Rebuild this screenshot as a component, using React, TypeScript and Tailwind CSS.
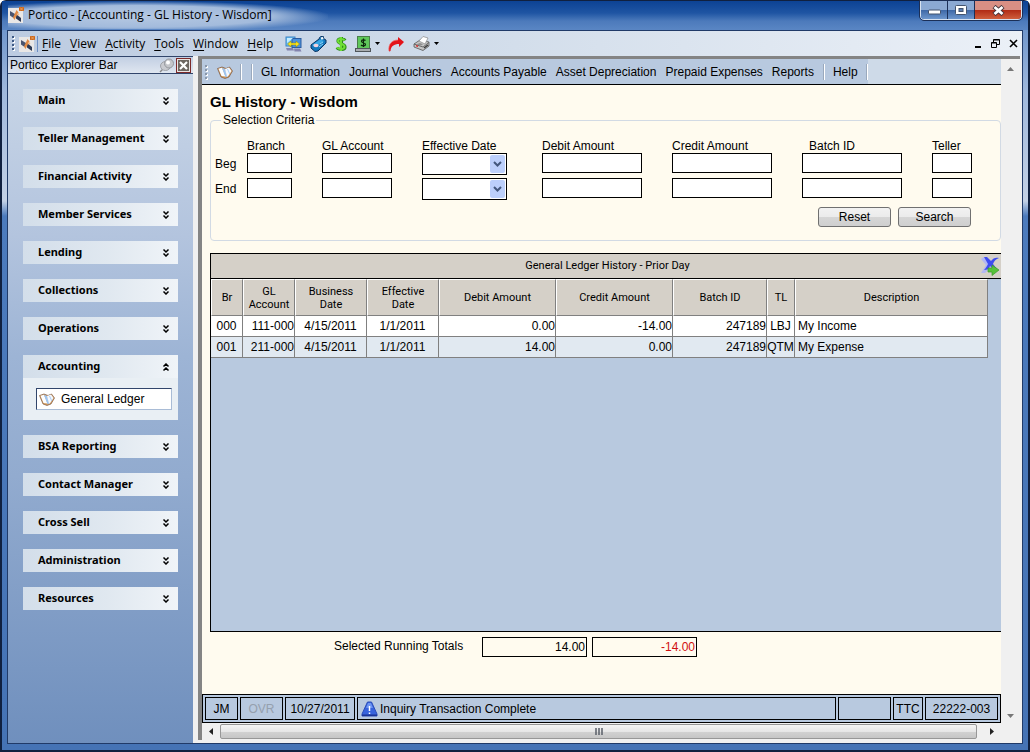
import type { ReactNode } from "react";

const sections = [
  "Main",
  "Teller Management",
  "Financial Activity",
  "Member Services",
  "Lending",
  "Collections",
  "Operations",
  "Accounting",
  "BSA Reporting",
  "Contact Manager",
  "Cross Sell",
  "Administration",
  "Resources",
];

const menus = ["File", "View", "Activity", "Tools", "Window", "Help"];

const modules = [
  "GL Information",
  "Journal Vouchers",
  "Accounts Payable",
  "Asset Depreciation",
  "Prepaid Expenses",
  "Reports",
];

const fields = [
  { label: "Branch", width: "w-[45px]" },
  { label: "GL Account", width: "w-[70px]" },
  { label: "Effective Date", width: "w-[85px]", date: true },
  { label: "Debit Amount", width: "w-[100px]" },
  { label: "Credit Amount", width: "w-[100px]" },
  { label: "Batch ID", width: "w-[100px]", indent: true },
  { label: "Teller", width: "w-[40px]" },
];

const columns = [
  { title: "Br", width: "w-[32px]", align: "text-center" },
  { title: "GL\nAccount", width: "w-[52px]", align: "text-right" },
  { title: "Business\nDate", width: "w-[72px]", align: "text-center" },
  { title: "Effective\nDate", width: "w-[72px]", align: "text-center" },
  { title: "Debit Amount", width: "w-[117px]", align: "text-right" },
  { title: "Credit Amount", width: "w-[117px]", align: "text-right" },
  { title: "Batch ID", width: "w-[94px]", align: "text-right" },
  { title: "TL", width: "w-[28px]", align: "text-center" },
  { title: "Description", width: "w-[193px]", align: "pl-[3px] text-left" },
];

const rows = [
  ["000", "111-000", "4/15/2011", "1/1/2011", "0.00", "-14.00", "247189", "LBJ", "My Income"],
  ["001", "211-000", "4/15/2011", "1/1/2011", "14.00", "0.00", "247189", "QTM", "My Expense"],
];

function AppIcon() {
  return (
    <svg width="16" height="16" viewBox="0 0 16 16" className="shrink-0">
      <rect y="1" width="15" height="15" fill="#e9e7e6" />
      <path d="M2 4l5 3v5L2 8.500z" fill="#4a5570" />
      <path d="M8 7l5 4v4l-5-3.500z" fill="#2d3a55" />
      <path d="M8.500 3 10.500 5.500 8 10 6.500 13 5 10.500z" fill="#e08a45" />
      <path d="M9 6l2.500 1L10 9z" fill="#f3b57e" />
      <rect x="11" width="5" height="4" fill="#c9661c" />
      <path d="M12 .5l3 3M15 .5l-3 3" stroke="#f2a765" strokeWidth=".9" />
    </svg>
  );
}

function BookIcon() {
  return (
    <svg width="16" height="13" viewBox="0 0 16 13" className="shrink-0">
      <path d="M.5 2.500 5 1l4 1.500L12.500 1l3 4-3.500 6-4 1.500L4 11z" fill="#d39a5b" stroke="#6b4a35" strokeWidth=".6" />
      <path d="M1.500 2.800 5 1.700 8.500 10.500 4.500 10z" fill="#fbfdff" />
      <path d="M5 1.700 8 3l2.500 7.500-2 .8z" fill="#9cc4f2" />
      <path d="M8 3l4-1.500L14.500 5l-3.300 5-1.200.7z" fill="#f3f8ff" />
      <path d="M10.500 3l2.300 5" stroke="#a9cdf5" />
    </svg>
  );
}

function Chevrons({ up }: { up?: boolean }) {
  return (
    <svg width="8" height="8" viewBox="0 0 8 8" className="shrink-0">
      <path
        d={up ? "M1.500 3.500 4 1l2.500 2.500M1.500 7.500 4 5l2.500 2.500" : "M1.500.5 4 3 6.500.5M1.500 4.500 4 7l2.500-2.500"}
        fill="none"
        stroke="#000"
        strokeWidth="1.500"
      />
    </svg>
  );
}

function Caret() {
  return (
    <svg width="5" height="3" viewBox="0 0 5 3" className="shrink-0">
      <path d="M0 0h5L2.500 3z" fill="#000" />
    </svg>
  );
}

function NetworkIcon() {
  return (
    <svg width="17" height="16" viewBox="0 0 17 16">
      <rect x="1" y="1" width="9" height="9" fill="#6cc6f8" stroke="#3c82c4" />
      <rect x="7" y="2.500" width="9" height="9" fill="#4b92dc" stroke="#2c5c9f" />
      <path d="M2 2h6L2 7z" fill="#c5ecff" />
      <path d="M2.500 8 6 5v2h5V5l3.500 3L11 11V9H6v2z" fill="#f6e21c" stroke="#8c7c10" strokeWidth=".5" />
      <path d="M1 12h7l1 2.500H2zM9 12.500h6l1.500 3h-7z" fill="#8384ae" />
    </svg>
  );
}

function CardIcon() {
  return (
    <svg width="17" height="16" viewBox="0 0 17 16">
      <path d="M1 9 9 3l1-2 3-1 1 3 2 1v3L8 15l-3 .5L1 12z" fill="#1478bd" stroke="#0b3564" />
      <path d="M2 9l8-5.500L14 5 6 11z" fill="#37a6e4" />
      <path d="M10.500 1.500 13 1l.5 2-2 .8z" fill="#f4f8fb" />
      <ellipse cx="6" cy="9.500" rx="2.600" ry="1.800" fill="#f4d3de" />
      <path d="M10 8l3-2M9 11l4-3" stroke="#8fd4f7" />
    </svg>
  );
}

function DollarIcon() {
  return (
    <svg width="12" height="16" viewBox="0 0 12 16">
      <path d="M10 4.500C9 2.500 3 2 3 5c0 3 7 2.500 7 6 0 3.500-6.500 3-8 .5M6.500 1v14" fill="none" stroke="#2f8a1c" strokeWidth="3.200" />
      <path d="M9.500 4.500C8.500 2.500 3 2.500 3 5c0 3 6.500 2.500 6.500 5.800 0 3-5.800 2.700-7.500.5M6 1v14" fill="none" stroke="#6fdf35" strokeWidth="2" />
    </svg>
  );
}

function CashIcon() {
  return (
    <svg width="16" height="16" viewBox="0 0 16 16">
      <rect x="2.500" y=".5" width="12" height="12" fill="#5fc75a" stroke="#4a7d49" />
      <path d="M10.500 4.500C9.500 3.500 6.500 3.500 6.500 5.200c0 1.800 4 1.300 4 3.300 0 1.800-3.500 1.700-4.500.5M8.500 2.500v8.500" fill="none" stroke="#0b260b" strokeWidth="1.200" />
      <rect x=".5" y="12.500" width="15" height="3" fill="#a9adb0" stroke="#50565a" />
    </svg>
  );
}

function RedArrowIcon() {
  return (
    <svg width="17" height="16" viewBox="0 0 17 16">
      <path d="M1 15.500C0 8 4 4 10 4V1l6 5-5 5V8C6 8 3 10 2.500 15z" fill="#e3131a" />
      <path d="M1 15C0 8 4 4 10 4" fill="none" stroke="#f26b68" strokeWidth=".7" />
    </svg>
  );
}

function PrinterIcon() {
  return (
    <svg width="17" height="15" viewBox="0 0 17 15">
      <path d="M1 8 7 4l9 2v4l-6 4.500L1 11z" fill="#c4c4c4" stroke="#555" strokeWidth=".8" />
      <path d="M6 5l4-4.500 5 1.500-3 6z" fill="#fff" stroke="#888" strokeWidth=".7" />
      <path d="M1 8l9 3 6-4.500" fill="none" stroke="#555" strokeWidth=".8" />
      <path d="M3 8.500 7 7l3 1.200-2 1.300z" fill="#8f8f8f" />
      <path d="M3 9.700l2 .6" stroke="#e02020" strokeWidth="1.400" />
      <path d="M11 12l4-3" stroke="#3c3c3c" strokeWidth="1.500" />
    </svg>
  );
}

function ExportIcon() {
  return (
    <svg width="20" height="20" viewBox="0 0 20 20">
      <path d="M1 3l3-2 5 5-1 3 2 3-5 5H1l5-8z" fill="#b3b7f3" />
      <path d="M4 1h3l4 4c2-3 5-4 8-3-3 1-5 3-6 6l4 5-3 1-4-4c-1 3-3 4-6 4 2-2 3-4 4-6z" fill="#3f4cf0" />
      <path d="M8 12h4V9l7 5-7 5.500V16H8z" fill="#56c239" stroke="#3a9a2a" strokeWidth=".7" />
    </svg>
  );
}

function Grip({ tone }: { tone: string }) {
  return (
    <svg width="3" height="15" viewBox="0 0 3 15" className="shrink-0">
      {[0, 4, 8, 12].map((y) => (
        <g key={y}>
          <rect x="1" y={y + 1} width="2" height="2" fill="#fff" />
          <rect x="0" y={y} width="2" height="2" fill={tone} />
        </g>
      ))}
    </svg>
  );
}

function Separator() {
  return <div className="h-4 w-[2px] shrink-0 border-r border-white bg-[#9aa9bd]" />;
}

function TitleBar() {
  return (
    <header className="flex h-[29px] items-start justify-between bg-[linear-gradient(to_bottom,#0c4294_0px,#1f55a3_12px,#4c7abb_20px,#5a86c4_29px)] pl-[6px] pr-[6px]">
      <div className="flex h-[28px] w-[320px] items-center gap-1 bg-[radial-gradient(ellipse_at_40%_55%,#b5c8e2_0%,#a3bbdc_50%,transparent_72%)] font-['Open_Sans',sans-serif] text-[12px] text-black">
        <AppIcon />
        <h1 className="whitespace-nowrap">Portico - [Accounting - GL History - Wisdom]</h1>
      </div>
      <div className="flex h-[19px] overflow-hidden rounded-b-[4px] border border-t-0 border-[#d6e1f0] outline outline-[#1b2f57]">
        <button aria-label="Minimize" className="flex w-[27px] items-center justify-center border-r border-[#1b2f57] bg-[linear-gradient(to_bottom,#8ba9d3_50%,#3d67a6_50%,#6d96cc)]">
          <svg width="13" height="6" viewBox="0 0 13 6" className="mt-1">
            <rect x=".5" y="1" width="12" height="4" rx="1" fill="#fff" stroke="#44546e" />
          </svg>
        </button>
        <button aria-label="Maximize" className="flex w-[27px] items-center justify-center border-r border-[#1b2f57] bg-[linear-gradient(to_bottom,#8ba9d3_50%,#3d67a6_50%,#6d96cc)]">
          <svg width="12" height="10" viewBox="0 0 12 10">
            <rect x=".5" y=".5" width="11" height="9" rx="1" fill="#fff" stroke="#44546e" />
            <rect x="4" y="3.500" width="4" height="3" fill="#5c7fb2" stroke="#44546e" />
          </svg>
        </button>
        <button aria-label="Close" className="flex w-[46px] items-center justify-center bg-[linear-gradient(to_bottom,#d98f84_50%,#b02a14_50%,#cf5f3d)]">
          <svg width="13" height="11" viewBox="0 0 13 11">
            <path d="M2 1.500 11 9.500M11 1.500 2 9.500" stroke="#44343a" strokeWidth="4.500" />
            <path d="M2.500 2l8 7M10.500 2l-8 7" stroke="#fff" strokeWidth="2.800" />
          </svg>
        </button>
      </div>
    </header>
  );
}

function ToolButton({ label, children }: { label: string; children: ReactNode }) {
  return (
    <button aria-label={label} className="flex items-center gap-1">
      {children}
    </button>
  );
}

function MenuBar() {
  return (
    <div className="flex h-[25px] items-center bg-[linear-gradient(to_right,#bccbe1,#d3deeb_50%,#ebf0f7)] pl-1 pr-1">
      <Grip tone="#3f5a85" />
      <div className="ml-1 flex items-center gap-[2px]">
        <AppIcon />
        <div className="h-4 w-px bg-[#6d8fc4]" />
      </div>
      <nav className="ml-1 flex gap-[9px] font-['Open_Sans',sans-serif] text-[12px]">
        {menus.map((menu) => (
          <button key={menu}>
            <span className="underline underline-offset-2">{menu[0]}</span>
            {menu.slice(1)}
          </button>
        ))}
      </nav>
      <div className="ml-3 flex items-center gap-2">
        <ToolButton label="Network"><NetworkIcon /></ToolButton>
        <ToolButton label="Member card"><CardIcon /></ToolButton>
        <ToolButton label="Currency"><DollarIcon /></ToolButton>
        <ToolButton label="Cash"><CashIcon /><Caret /></ToolButton>
        <ToolButton label="Forward"><RedArrowIcon /></ToolButton>
        <ToolButton label="Print"><PrinterIcon /><Caret /></ToolButton>
      </div>
      <div className="ml-auto flex items-center gap-[9px]">
        <button aria-label="Minimize window">
          <svg width="7" height="9" viewBox="0 0 7 9"><rect y="7" width="6" height="2" /></svg>
        </button>
        <button aria-label="Restore window">
          <svg width="9" height="9" viewBox="0 0 9 9" fill="none" stroke="#000">
            <path d="M2.500 3V.5h6v5H6M2.500 1h6" />
            <path d="M.5 3.500h5v5h-5zM.5 4h5" />
          </svg>
        </button>
        <button aria-label="Close window">
          <svg width="9" height="9" viewBox="0 0 9 9"><path d="M1 1l7 7M8 1 1 8" stroke="#000" strokeWidth="1.600" /></svg>
        </button>
      </div>
    </div>
  );
}

function ExplorerBar() {
  return (
    <aside className="flex w-[185px] shrink-0 flex-col bg-[linear-gradient(to_bottom,#cbd8e8_0px,#b3c4de_180px,#9db4d5_300px,#92abcf_420px,#6f8fbd_690px)]">
      <div className="flex h-[18px] items-center border-y border-[#31456b] bg-[linear-gradient(to_bottom,#c2cfe3,#dfe6f0)] pl-[2px]">
        <h2 className="text-[12px]">Portico Explorer Bar</h2>
        <button aria-label="Pin" className="ml-auto">
          <svg width="16" height="15" viewBox="0 0 16 15">
            <path d="M1 14l5-5" stroke="#888" strokeWidth="1.500" />
            <ellipse cx="6.500" cy="8" rx="5" ry="4.500" fill="#c9cbd0" stroke="#a0a3a9" />
            <circle cx="10" cy="5.500" r="4.500" fill="#c4c6ca" stroke="#94979d" />
            <circle cx="9" cy="4.500" r="2" fill="#fff" />
          </svg>
        </button>
        <button aria-label="Close explorer bar" className="ml-px mr-[2px] flex size-[15px] items-center justify-center border border-[#7c2a2a] bg-[#e9e4e2]">
          <svg width="11" height="11" viewBox="0 0 11 11">
            <rect width="11" height="11" fill="#6c6660" />
            <path d="M2 2l7 7M9 2 2 9" stroke="#fff" strokeWidth="2.200" />
          </svg>
        </button>
      </div>
      <div className="flex flex-col gap-[15px] p-[15px]">
        {sections.map((name) => (
          <section key={name} className="bg-[#e9eff4]">
            <button className="flex h-[23px] w-full items-center justify-between bg-[linear-gradient(to_right,#d3deea,#e0e8f0_55%,#f0f4f8)] pl-[15px] pr-2 font-['Noto_Sans',sans-serif] text-[11px] font-bold">
              {name}
              <Chevrons up={name === "Accounting"} />
            </button>
            {name === "Accounting" && (
              <div className="py-[10px] pl-[13px] pr-[6px]">
                <a href="#general-ledger" className="flex h-[22px] items-center gap-[6px] border border-[#a9bcd6] border-l-[#31456b] border-t-[#31456b] bg-white pl-[2px] text-[12px]">
                  <BookIcon />
                  General Ledger
                </a>
              </div>
            )}
          </section>
        ))}
      </div>
    </aside>
  );
}

function ModuleBar() {
  return (
    <div className="flex h-[26px] items-center border-b border-black bg-[linear-gradient(to_right,#b8c9df_666px,#cedae8_666px)] pl-[3px] pt-px text-[12px]">
      <Grip tone="#8996a8" />
      <button aria-label="Ledger" className="ml-[9px] mr-[7px]"><BookIcon /></button>
      <Separator />
      <div className="w-[9px]" />
      <Separator />
      <nav className="ml-2 mr-[9px] flex gap-[9px] whitespace-nowrap">
        {modules.map((name) => (
          <button key={name}>{name}</button>
        ))}
      </nav>
      <Separator />
      <button className="mx-2">Help</button>
      <Separator />
    </div>
  );
}

function Criteria() {
  return (
    <fieldset className="min-w-0 rounded-[4px] border border-[#d2dae4] pb-[13px] pl-1 text-[12px]">
      <legend className="ml-[6px] px-[2px] leading-4">Selection Criteria</legend>
      <div className="grid grid-cols-[32px_75px_100px_120px_130px_130px_130px_40px] gap-y-[3px] pt-[11px]">
        <span />
        {fields.map((f) => (
          <span key={f.label} className={`-mb-1 whitespace-nowrap leading-[15px] ${f.indent ? "pl-[7px]" : ""}`}>
            {f.label}
          </span>
        ))}
        {["Beg", "End"].map((edge) => (
          <div key={edge} className="contents">
            <span className="leading-[22px]">{edge}</span>
            {fields.map((f) =>
              f.date ? (
                <div key={f.label} className={`relative h-[22px] ${f.width}`}>
                  <select aria-label={`${edge} ${f.label}`} className="size-full appearance-none border border-black bg-white">
                    <option></option>
                  </select>
                  <svg width="15" height="18" viewBox="0 0 15 18" className="pointer-events-none absolute right-[2px] top-[2px]">
                    <rect width="15" height="18" rx="2" fill="#bccffb" />
                    <path d="M4 7l3.500 3.500L11 7" fill="none" stroke="#43577d" strokeWidth="2" />
                  </svg>
                </div>
              ) : (
                <input key={f.label} aria-label={`${edge} ${f.label}`} className={`h-5 border border-black bg-white px-1 ${f.width}`} />
              )
            )}
          </div>
        ))}
      </div>
      <div className="mr-[29px] mt-[7px] flex justify-end gap-[7px]">
        {["Reset", "Search"].map((name) => (
          <button key={name} className="h-5 w-[73px] rounded-[3px] border border-[#707070] bg-[linear-gradient(to_bottom,#f2f2f2_0%,#ebebeb_50%,#d6d6d6_50%,#cfcfcf_100%)] leading-[18px]">
            {name}
          </button>
        ))}
      </div>
    </fieldset>
  );
}

function LedgerGrid() {
  return (
    <section className="mt-3 flex flex-1 flex-col border border-r-0 border-black bg-[#b8c9df]">
      <div className="flex h-[25px] items-center border-b border-black bg-[#d5d0c8] pr-px">
        <h3 className="flex-1 pl-6 text-center font-['Roboto',sans-serif] text-[11px] leading-5">General Ledger History - Prior Day</h3>
        <button aria-label="Export"><ExportIcon /></button>
      </div>
      <table className="w-[777px] table-fixed border-separate border-spacing-0">
        <thead>
          <tr className="h-[37px]">
            {columns.map((c) => (
              <th
                key={c.title}
                className={`whitespace-pre-line border-b border-l border-r border-t border-b-[#808080] border-l-white border-r-[#808080] border-t-white bg-[#d5d0c8] px-px font-['Roboto',sans-serif] text-[11px] font-normal leading-[13px] ${c.width}`}
              >
                {c.title}
              </th>
            ))}
          </tr>
        </thead>
        <tbody>
          {rows.map((row, i) => (
            <tr key={row[0]} className={`h-[21px] ${i % 2 ? "bg-[#e1e9f1]" : "bg-white"}`}>
              {row.map((cell, n) => (
                <td key={n} className={`whitespace-nowrap border-b border-r border-[#808080] p-0 text-[12px] leading-5 ${columns[n].align}`}>
                  {cell}
                </td>
              ))}
            </tr>
          ))}
        </tbody>
      </table>
    </section>
  );
}

function StatusBar() {
  const box = "flex items-center justify-center border border-black";
  return (
    <footer className="flex h-[29px] gap-[2px] border border-black bg-[#b8c9df] p-[2px] text-[12px]">
      <span className={`${box} w-[33px]`}>JM</span>
      <span className={`${box} w-[43px] text-[#95a0ae]`}>OVR</span>
      <span className={`${box} w-[70px]`}>10/27/2011</span>
      <span className="flex flex-1 items-center gap-[2px] border border-black pl-[3px]">
        <svg width="17" height="16" viewBox="0 0 17 16">
          <path d="M6.500 1h4L16 13v2H1v-2z" fill="#3763dc" stroke="#2a4cb8" strokeLinejoin="round" />
          <path d="M7 2h3l2 5H5z" fill="#6d95f2" />
          <path d="M1 13.500h15V15H1z" fill="#1a3597" />
          <path d="M8.500 5v5M8.500 11.500V13" stroke="#fff" strokeWidth="1.500" />
        </svg>
        Inquiry Transaction Complete
      </span>
      <span className={`${box} w-[53px]`} />
      <span className={`${box} w-[30px]`}>TTC</span>
      <span className={`${box} w-[73px]`}>22222-003</span>
    </footer>
  );
}

export default function App() {
  return (
    <div className="flex min-h-screen flex-col rounded-t-[6px] border-2 border-t-[1px] border-[#10203f] bg-[linear-gradient(to_bottom,#5a86c4_0px,#9fb8dc_90px,#c3d1e6_200px,#4c7bbd_215px,#4573b5_100%)] font-['Liberation_Sans',sans-serif] text-black">
      <TitleBar />
      <div className="mx-[5px] mb-[6px] flex flex-1 flex-col border border-[#203a68] bg-[#f0f0f0]">
        <MenuBar />
        <div className="flex flex-1">
          <ExplorerBar />
          <div className="w-[5px] shrink-0" />
          <div className="mb-[3px] mr-[2px] flex min-w-0 flex-1 border-l-4 border-t-[3px] border-l-[#848484] border-t-[#848484]">
            <div className="flex min-w-0 flex-1 flex-col">
              <ModuleBar />
              <main className="flex flex-1 flex-col bg-[#fffbef] pl-2 pt-[7px]">
                <h2 className="text-[15px] font-bold leading-5">GL History - Wisdom</h2>
                <Criteria />
                <LedgerGrid />
                <div className="flex gap-[5px] pb-[37px] pl-[124px] pt-[5px] text-[12px]">
                  <span className="w-[143px] leading-[18px]">Selected Running Totals</span>
                  <input aria-label="Debit total" readOnly value="14.00" className="h-5 w-[105px] border border-black bg-transparent px-px text-right" />
                  <input aria-label="Credit total" readOnly value="-14.00" className="h-5 w-[105px] border border-black bg-transparent px-px text-right text-[#d01010]" />
                </div>
              </main>
              <StatusBar />
              <div className="flex h-[17px] items-center">
                <button aria-label="Scroll left" className="flex w-[18px] justify-center">
                  <svg width="4" height="7" viewBox="0 0 4 7"><path d="M4 0v7L0 3.500z" fill="#222" /></svg>
                </button>
                <div className="flex h-[15px] flex-1 items-center justify-center rounded-[2px] border border-[#979797] bg-[linear-gradient(to_bottom,#f5f5f5_0%,#e6e6e6_50%,#d2d2d2_50%,#c6c6c6_100%)]">
                  <svg width="8" height="7" viewBox="0 0 8 7"><path d="M1 0v7M4 0v7M7 0v7" stroke="#5a5f68" strokeWidth="1.500" /></svg>
                </div>
                <button aria-label="Scroll right" className="flex w-[24px] justify-center pl-[6px]">
                  <svg width="4" height="7" viewBox="0 0 4 7"><path d="M0 0v7l4-3.500z" fill="#222" /></svg>
                </button>
              </div>
            </div>
            <div className="flex w-[19px] flex-col items-center justify-between pb-[22px] pt-2">
              <button aria-label="Scroll up">
                <svg width="7" height="4" viewBox="0 0 7 4" className="block"><path d="M0 4h7L3.500 0z" fill="#777" /></svg>
              </button>
              <button aria-label="Scroll down">
                <svg width="7" height="4" viewBox="0 0 7 4" className="block"><path d="M0 0h7L3.500 4z" fill="#777" /></svg>
              </button>
            </div>
          </div>
        </div>
      </div>
    </div>
  );
}
